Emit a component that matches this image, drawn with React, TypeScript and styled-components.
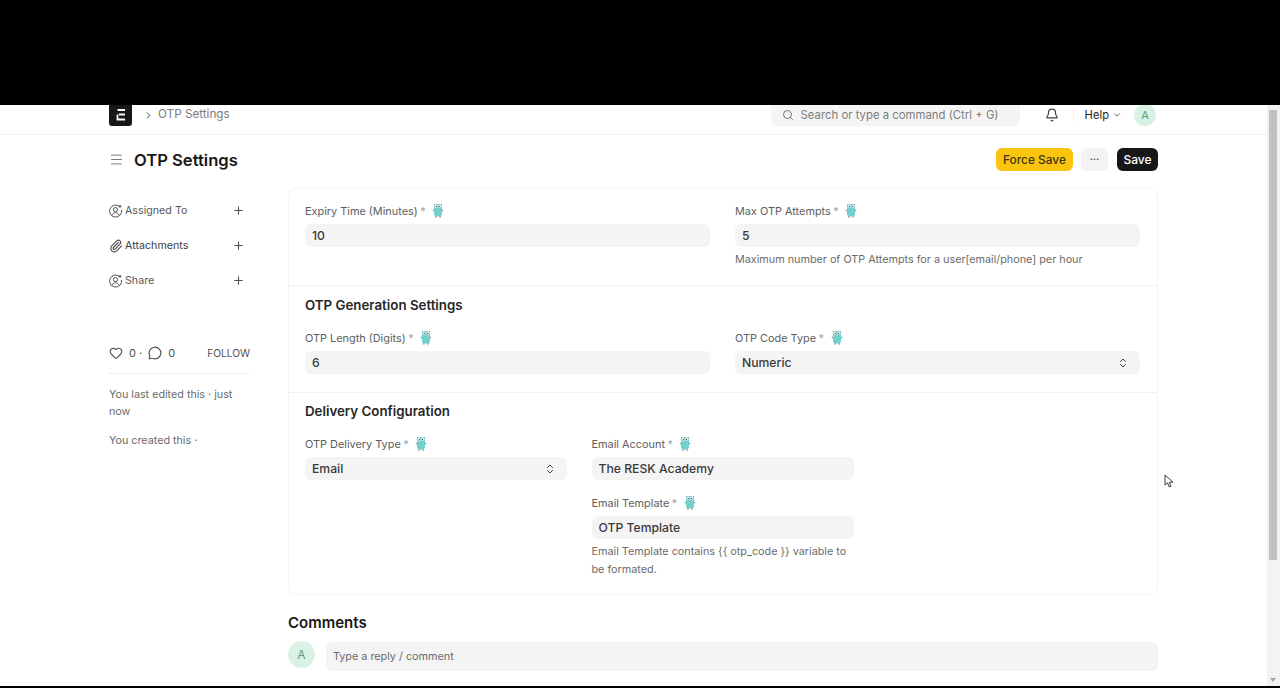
import React from 'react';
import styled, { createGlobalStyle } from 'styled-components';
import { Bell, ChevronDown, ChevronRight, ChevronsUpDown, Heart, Menu, MessageCircle, Paperclip, Plus, Search } from 'lucide-react';

const GlobalStyle = createGlobalStyle`
  html, body { margin: 0; padding: 0; height: 688px; overflow: hidden; background: #000; }
  body { font-family: Inter, "Liberation Sans", sans-serif; color: #171717; }
  * { box-sizing: border-box; }
`;

function Gopher() {
  return (
    <GopherSvg viewBox="0 0 12 15">
      <path d="M2 4.500C2 2 3.800 1 6 1s4 1 4 3.500V11c0 1.800-1.500 2.500-4 2.500S2 12.800 2 11Z" fill="#6fd0cf" />
      <circle cx="2.600" cy="1.800" r=".8" fill="#8aa5a8" />
      <circle cx="9.400" cy="1.800" r=".8" fill="#8aa5a8" />
      <circle cx="4.300" cy="3.400" r="1.300" fill="#e8f4f4" />
      <circle cx="7.700" cy="3.400" r="1.300" fill="#e8f4f4" />
      <circle cx="4.500" cy="3.500" r=".6" fill="#2b3a42" />
      <circle cx="7.500" cy="3.500" r=".6" fill="#2b3a42" />
      <path d="M5.300 4.800h1.400v1.400H5.300Z" fill="#c9b9a5" />
      <path d="M.8 6.800H2v1.400H.8ZM10 6.800h1.200v1.400H10ZM3 13.200h1.800v1.200H3ZM7.200 13.200H9v1.200H7.200Z" fill="#7d9a9c" />
    </GopherSvg>
  );
}

function UserPlusRound() {
  return (
    <svg width="14" height="14" viewBox="0 0 14 14" fill="none" stroke="#525252" strokeWidth="1">
      <path d="M10.800 2.800A6 6 0 1 0 12.500 6" />
      <circle cx="6.500" cy="5.600" r="2.100" />
      <path d="M3 11c.8-1.500 2-2.200 3.500-2.200s2.700.7 3.500 2.200" />
      <path d="M11 .8v3M9.500 2.300h3" />
    </svg>
  );
}

function Field({ label, value, hint, select, w }: { label: string; value: string; hint?: React.ReactNode; select?: boolean; w: number }) {
  return (
    <FieldBox $w={w}>
      <FieldLabel>
        {label} <Star>*</Star>
        <Gopher />
      </FieldLabel>
      <Control>
        <ControlValue>{value}</ControlValue>
        {select && <ChevronsUpDown size={12} color="#404040" />}
      </Control>
      {hint && <Hint>{hint}</Hint>}
    </FieldBox>
  );
}

export default function App() {
  return (
    <>
      <GlobalStyle />
      <Screen>
        <Viewport>
          <Content>
            <NavBar>
              <NavInner>
                <NavLeft>
                  <Logo>
                    <svg width="10" height="12" viewBox="0 0 10 12" fill="none" stroke="#fff" strokeWidth="1.800">
                      <path d="M9 1H1.500M9 5.500H3M9 10.500H1.500V5.500" />
                    </svg>
                  </Logo>
                  <ChevronRight size={11} color="#404040" />
                  <Crumb>OTP Settings</Crumb>
                </NavLeft>
                <NavRight>
                  <SearchBox>
                    <Search size={12} color="#737373" />
                    <span>Search or type a command (Ctrl + G)</span>
                  </SearchBox>
                  <BellWrap>
                    <Bell size={14} color="#404040" />
                  </BellWrap>
                  <Help>
                    Help <ChevronDown size={10} color="#525252" />
                  </Help>
                  <NavAvatar>A</NavAvatar>
                </NavRight>
              </NavInner>
            </NavBar>

            <PageHead>
              <TitleGroup>
                <Menu size={15} color="#737373" strokeWidth={1.500} />
                <Title>OTP Settings</Title>
              </TitleGroup>
              <Actions>
                <ForceSave>Force Save</ForceSave>
                <MoreButton>···</MoreButton>
                <SaveButton>Save</SaveButton>
              </Actions>
            </PageHead>

            <Body>
              <Side>
                <SideRow>
                  <SideLabel><UserPlusRound />Assigned To</SideLabel>
                  <Plus size={13} color="#525252" />
                </SideRow>
                <SideRow>
                  <SideLabel $dark><Paperclip size={14} color="#525252" />Attachments</SideLabel>
                  <Plus size={13} color="#525252" />
                </SideRow>
                <SideRow>
                  <SideLabel><UserPlusRound />Share</SideLabel>
                  <Plus size={13} color="#525252" />
                </SideRow>
                <Stats>
                  <StatGroup>
                    <Heart size={14} color="#525252" /> 0 · <MessageCircle size={14} color="#525252" /> 0
                  </StatGroup>
                  <Follow>FOLLOW</Follow>
                </Stats>
                <Activity>You last edited this · just now</Activity>
                <Activity>You created this ·</Activity>
              </Side>

              <Main>
                <Card>
                  <FirstSection>
                    <TwoCols>
                      <Field w={405} label="Expiry Time (Minutes)" value="10" />
                      <Field
                        w={405}
                        label="Max OTP Attempts"
                        value="5"
                        hint="Maximum number of OTP Attempts for a user[email/phone] per hour"
                      />
                    </TwoCols>
                  </FirstSection>
                  <Section>
                    <SectionTitle>OTP Generation Settings</SectionTitle>
                    <TwoCols>
                      <Field w={405} label="OTP Length (Digits)" value="6" />
                      <Field w={405} label="OTP Code Type" value="Numeric" select />
                    </TwoCols>
                  </Section>
                  <LastSection>
                    <DeliveryTitle>Delivery Configuration</DeliveryTitle>
                    <ThreeCols>
                      <Field w={262} label="OTP Delivery Type" value="Email" select />
                      <FieldStack>
                        <Field w={262} label="Email Account" value="The RESK Academy" />
                        <Field
                          w={262}
                          label="Email Template"
                          value="OTP Template"
                          hint="Email Template contains {{ otp_code }} variable to be formated."
                        />
                      </FieldStack>
                    </ThreeCols>
                  </LastSection>
                </Card>
                <CommentsTitle>Comments</CommentsTitle>
                <CommentRow>
                  <CommentAvatar>A</CommentAvatar>
                  <CommentInput>Type a reply / comment</CommentInput>
                </CommentRow>
              </Main>
            </Body>
            <Pointer viewBox="0 0 10 14" fill="#fff" stroke="#3f3f46" strokeWidth="1">
              <path d="M1 1v10l2.500-2.200L5.200 13l1.800-.8-1.700-4H9Z" />
            </Pointer>
          </Content>
          <Scrollbar>
            <Thumb />
            <ScrollArrow />
          </Scrollbar>
        </Viewport>
      </Screen>
    </>
  );
}

const Screen = styled.div`
  height: 688px;
  padding: 105px 0 2px;
  background: #000;
`;

const Viewport = styled.div`
  display: flex;
  height: 581px;
  background: #fff;
  overflow: hidden;
`;

const Content = styled.div`
  position: relative;
  flex: 1;
  min-width: 0;
`;

const NavBar = styled.div`
  height: 30px;
  border-bottom: 1px solid #f0f0f0;
`;

const NavInner = styled.div`
  display: flex;
  justify-content: space-between;
  width: 1048px;
  margin-left: 109px;
  height: 29px;
`;

const NavLeft = styled.div`
  display: flex;
  align-items: center;
  gap: 7px;
  height: 20px;
`;

const Logo = styled.div`
  display: flex;
  align-items: center;
  justify-content: center;
  width: 23px;
  height: 21px;
  margin-right: 4px;
  background: #171717;
  border-radius: 0 0 3px 3px;
`;

const Crumb = styled.span`
  margin: -2px 0 0 -3px;
  font-size: 11.700px;
  line-height: 18px;
  color: #7c7c7c;
`;

const NavRight = styled.div`
  display: flex;
  align-items: center;
  height: 20px;
`;

const SearchBox = styled.div`
  display: flex;
  align-items: center;
  gap: 7px;
  width: 249px;
  height: 21px;
  padding-left: 11px;
  background: #f5f5f5;
  border-radius: 0 0 6px 6px;
  font-size: 11.350px;
  color: #7c7c7c;
`;

const BellWrap = styled.div`
  display: flex;
  margin-left: 25px;
  padding-right: 14px;
  border-right: 1px solid #f0f0f0;
`;

const Help = styled.div`
  display: flex;
  align-items: center;
  gap: 3px;
  margin-left: 11px;
  font-size: 11.200px;
  color: #262626;
`;

const NavAvatar = styled.div`
  display: flex;
  align-items: center;
  justify-content: center;
  width: 22px;
  height: 22px;
  margin-left: 12px;
  margin-right: 1px;
  background: #d9f2e3;
  border-radius: 50%;
  font-size: 11px;
  color: #5d9b78;
`;

const PageHead = styled.div`
  display: flex;
  align-items: center;
  justify-content: space-between;
  width: 1049px;
  height: 48px;
  margin-left: 109px;
`;

const TitleGroup = styled.div`
  display: flex;
  align-items: center;
  gap: 10px;
`;

const Title = styled.h1`
  margin: 1px 0 0;
  font-size: 16.600px;
  font-weight: 600;
  color: #171717;
`;

const Actions = styled.div`
  display: flex;
  align-items: center;
`;

const ForceSave = styled.div`
  display: flex;
  align-items: center;
  height: 23px;
  padding: 0 7px;
  background: #fbc50f;
  border-radius: 6px;
  font-size: 11.900px;
  font-weight: 500;
  color: #3d3410;
`;

const MoreButton = styled.div`
  display: flex;
  align-items: center;
  justify-content: center;
  width: 27px;
  height: 23px;
  margin: 0 9px 0 8px;
  background: #f3f3f3;
  border-radius: 6px;
  font-size: 11px;
  color: #404040;
`;

const SaveButton = styled.div`
  display: flex;
  align-items: center;
  height: 23px;
  padding: 0 6.500px;
  background: #171717;
  border-radius: 6px;
  font-size: 12px;
  font-weight: 500;
  color: #fff;
`;

const Body = styled.div`
  display: flex;
  margin-left: 109px;
  width: 1049px;
`;

const Side = styled.aside`
  width: 179px;
  flex: none;
  padding-top: 10px;
`;

const SideRow = styled.div`
  display: flex;
  align-items: center;
  justify-content: space-between;
  width: 136px;
  height: 35px;
`;

const SideLabel = styled.div<{ $dark?: boolean }>`
  display: flex;
  align-items: center;
  gap: 2px;
  font-size: 10.700px;
  color: ${({ $dark }) => ($dark ? '#404040' : '#595959')};
`;

const Stats = styled.div`
  display: flex;
  align-items: center;
  justify-content: space-between;
  width: 141px;
  height: 32px;
  margin-top: 44px;
  border-bottom: 1px solid #ededed;
  padding-bottom: 10px;
  font-size: 11px;
  color: #525252;
`;

const StatGroup = styled.div`
  display: flex;
  align-items: center;
  gap: 6px;
`;

const Follow = styled.span`
  font-size: 10.200px;
  color: #525252;
`;

const Activity = styled.p`
  width: 141px;
  margin: 12px 0 0;
  font-size: 10.750px;
  line-height: 17px;
  color: #6b6b6b;
  & + & {
    margin-top: 12px;
  }
`;

const Main = styled.main`
  flex: 1;
  min-width: 0;
  margin-top: 5px;
`;

const Card = styled.div`
  border: 1px solid #f5f5f5;
  border-radius: 8px;
`;

const FirstSection = styled.section`
  padding: 14px 16px 16px;
  border-bottom: 1px solid #f0f0f0;
`;

const Section = styled.section`
  padding: 11px 16px 17.500px;
  border-bottom: 1px solid #f0f0f0;
`;

const LastSection = styled.section`
  padding: 10.500px 16px 15.500px;
`;

const SectionTitle = styled.h2`
  margin: 0 0 17.500px;
  font-size: 13.300px;
  font-weight: 600;
  color: #262626;
`;

const DeliveryTitle = styled(SectionTitle)`
  margin-bottom: 17px;
`;

const TwoCols = styled.div`
  display: flex;
  gap: 25px;
`;

const ThreeCols = styled.div`
  display: flex;
  align-items: flex-start;
  gap: 24.500px;
`;

const FieldStack = styled.div`
  display: flex;
  flex-direction: column;
  gap: 15px;
`;

const FieldBox = styled.div<{ $w: number }>`
  width: ${({ $w }) => $w}px;
`;

const FieldLabel = styled.div`
  display: flex;
  align-items: center;
  gap: 3.500px;
  height: 15px;
  margin-bottom: 6px;
  font-size: 10.900px;
  color: #5e5e5e;
`;

const Star = styled.span`
  color: #a3a3a3;
  margin-left: -1px;
`;

const GopherSvg = styled.svg`
  width: 12px;
  height: 15px;
  margin-left: 3px;
`;

const Control = styled.div`
  display: flex;
  align-items: center;
  justify-content: space-between;
  height: 23px;
  padding: 0 11px 0 7px;
  background: #f4f4f4;
  border-radius: 6px;
`;

const ControlValue = styled.span`
  font-size: 12.200px;
  font-weight: 500;
  color: #3a3a3a;
`;

const Hint = styled.p`
  margin: 4px 0 0;
  font-size: 10.800px;
  line-height: 17.500px;
  color: #6b6b6b;
`;

const CommentsTitle = styled.h3`
  margin: 18.500px 0 0;
  font-size: 15px;
  font-weight: 600;
  color: #171717;
`;

const CommentRow = styled.div`
  display: flex;
  align-items: flex-start;
  gap: 11px;
  margin-top: 10px;
`;

const CommentAvatar = styled.div`
  display: flex;
  align-items: center;
  justify-content: center;
  width: 27px;
  height: 27px;
  margin-top: -1px;
  background: #d9f2e3;
  border-radius: 50%;
  font-size: 12px;
  color: #5d9b78;
`;

const CommentInput = styled.div`
  flex: 1;
  display: flex;
  align-items: center;
  height: 29px;
  padding-left: 7px;
  background: #f4f4f4;
  border-radius: 6px;
  font-size: 10.800px;
  color: #6b6b6b;
`;

const Pointer = styled.svg`
  position: absolute;
  left: 1164px;
  top: 369px;
  width: 10px;
  height: 14px;
`;

const Scrollbar = styled.div`
  position: relative;
  width: 13px;
  flex: none;
  background: #f3f3f3;
  padding: 5px 3px 0 2px;
`;

const Thumb = styled.div`
  height: 450px;
  background: #c1c1c1;
`;

const ScrollArrow = styled.div`
  position: absolute;
  left: 3px;
  bottom: 4px;
  width: 0;
  height: 0;
  border-left: 3.500px solid transparent;
  border-right: 3.500px solid transparent;
  border-top: 4px solid #a3a3a3;
`;
